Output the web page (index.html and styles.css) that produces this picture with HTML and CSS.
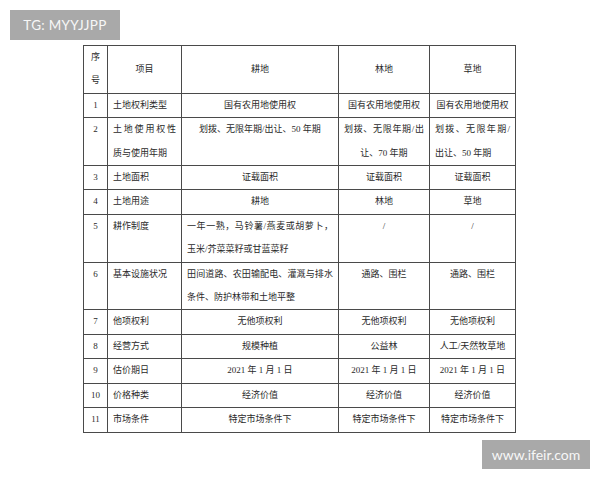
FILE: index.html
```html
<!DOCTYPE html>
<html>
<head>
<meta charset="utf-8">
<link rel="stylesheet" href="styles.css">
</head>
<body>
<div class="page">
  <table class="land">
    <colgroup>
      <col class="c1"><col class="c2"><col class="c3"><col class="c4"><col class="c5">
    </colgroup>
    <thead>
      <tr>
        <th>序<br>号</th>
        <th>项目</th>
        <th>耕地</th>
        <th>林地</th>
        <th>草地</th>
      </tr>
    </thead>
    <tbody>
      <tr><td class="n">1</td><td>土地权利类型</td><td class="ct">国有农用地使用权</td><td class="ct">国有农用地使用权</td><td class="ct">国有农用地使用权</td></tr>
      <tr><td class="n">2</td><td><span class="jl">土地使用权性</span>质与使用年期</td><td class="ct">划拨、无限年期/出让、50 年期</td><td class="ct"><span class="jl">划拨、无限年期/出</span>让、70 年期</td><td><span class="jl">划拨、无限年期/</span>出让、50 年期</td></tr>
      <tr><td class="n">3</td><td>土地面积</td><td class="ct">证载面积</td><td class="ct">证载面积</td><td class="ct">证载面积</td></tr>
      <tr><td class="n">4</td><td>土地用途</td><td class="ct">耕地</td><td class="ct">林地</td><td class="ct">草地</td></tr>
      <tr><td class="n">5</td><td>耕作制度</td><td><span class="jl">一年一熟，马铃薯/燕麦或胡萝卜，</span>玉米/芥菜菜籽或甘蓝菜籽</td><td class="ct">/</td><td class="ct">/</td></tr>
      <tr><td class="n">6</td><td>基本设施状况</td><td><span class="jl">田间道路、农田输配电、灌溉与排水</span>条件、防护林带和土地平整</td><td class="ct">通路、围栏</td><td class="ct">通路、围栏</td></tr>
      <tr><td class="n">7</td><td>他项权利</td><td class="ct">无他项权利</td><td class="ct">无他项权利</td><td class="ct">无他项权利</td></tr>
      <tr><td class="n">8</td><td>经营方式</td><td class="ct">规模种植</td><td class="ct">公益林</td><td class="ct">人工/天然牧草地</td></tr>
      <tr><td class="n">9</td><td>估价期日</td><td class="ct">2021 年 1 月 1 日</td><td class="ct">2021 年 1 月 1 日</td><td class="ct">2021 年 1 月 1 日</td></tr>
      <tr><td class="n">10</td><td>价格种类</td><td class="ct">经济价值</td><td class="ct">经济价值</td><td class="ct">经济价值</td></tr>
      <tr><td class="n">11</td><td>市场条件</td><td class="ct">特定市场条件下</td><td class="ct">特定市场条件下</td><td class="ct">特定市场条件下</td></tr>
    </tbody>
  </table>
  <div class="mark mark-tg">TG: MYYJJPP</div>
  <div class="mark mark-site">www.ifeir.com</div>
</div>
</body>
</html>
```
FILE: styles.css
```css
html, body {
  margin: 0;
  padding: 0;
  background: #ffffff;
}
.page {
  position: relative;
  width: 600px;
  height: 480px;
  padding: 45px 0 0 83px;
  box-sizing: border-box;
}
.land {
  border-collapse: collapse;
  table-layout: fixed;
  width: 432px;
  font-family: "Liberation Serif", "Noto Sans CJK SC", serif;
  font-size: 9px;
  color: #2a2a2a;
  line-height: 23.4px;
}
.c1 { width: 24px; }
.c2 { width: 74px; }
.c3 { width: 157px; }
.c4 { width: 91px; }
.c5 { width: 86px; }
.land th, .land td {
  border: 1px solid #4a4a4a;
  padding: 0 5px;
  vertical-align: top;
  text-align: left;
  font-weight: normal;
}
.land th {
  vertical-align: middle;
  text-align: center;
}
.land td.n, .land td.ct {
  text-align: center;
}
.land td.n { padding: 0 2px; }
.jl {
  display: block;
  text-align: justify;
  text-align-last: justify;
}
.mark {
  position: absolute;
  background: #a9a9a9;
  color: #f7f7f7;
  font-family: Lato, "Liberation Sans", sans-serif;
  display: flex;
  align-items: center;
  justify-content: center;
}
.mark-tg {
  left: 10px;
  top: 10px;
  width: 110px;
  height: 30px;
  font-size: 13.5px;
  letter-spacing: 0.3px;
}
.mark-site {
  left: 482px;
  top: 440px;
  width: 108px;
  height: 29px;
  font-size: 14px;
}
```
